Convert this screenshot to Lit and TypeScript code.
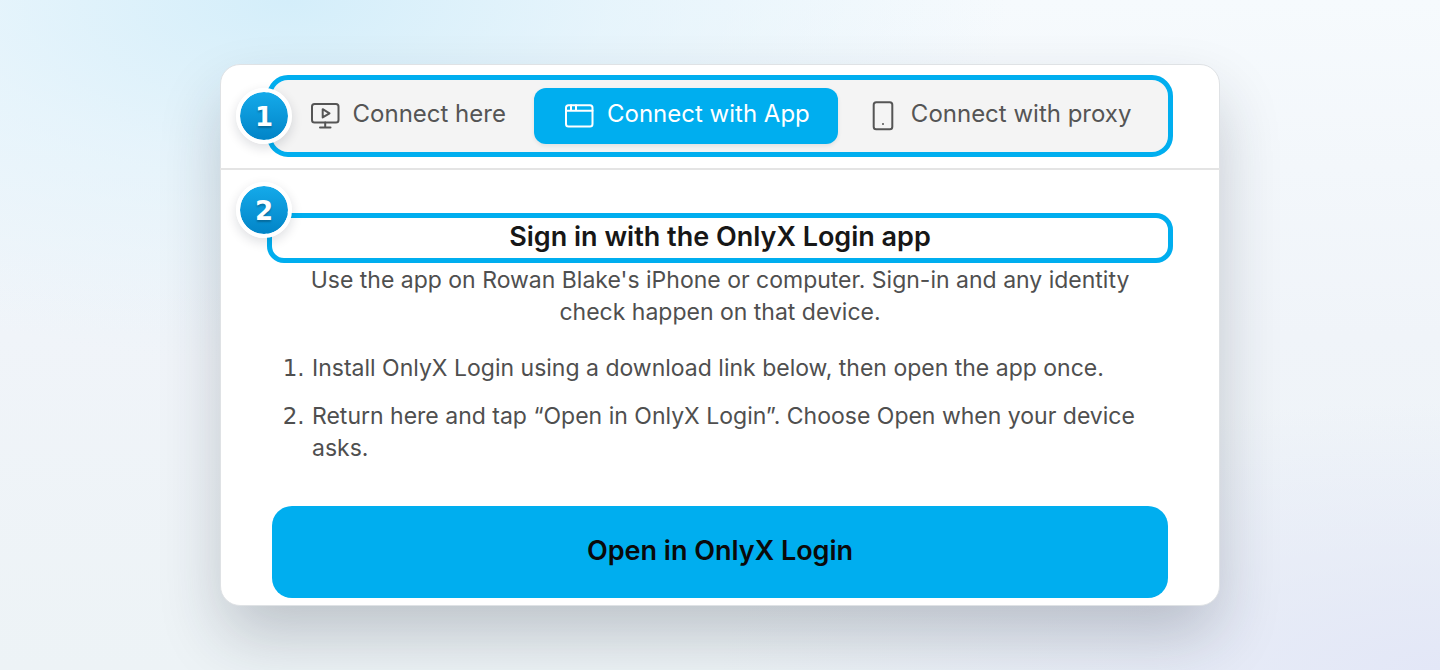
import { LitElement, html, css, svg } from "lit";
import { customElement, state } from "lit/decorators.js";

const icons = {
  here: svg`<rect x="3" y="4" width="26.500" height="18.500" rx="2.500"/><path d="M13.700 9.200v8.200l6.800-4.100z M16.200 22.500v5 M11 27.500h10.500"/>`,
  app: svg`<rect x="3" y="5.200" width="26.500" height="21.300" rx="2.500"/><path d="M3 10.700h26.500 M8 5.200v5.500 M13 5.200v5.500"/>`,
  proxy: svg`<rect x="6.700" y="2.300" width="18.600" height="27" rx="2.500"/><path d="M16 24v0.100"/>`,
};

const tabs = [
  { id: "here", label: "Connect here", icon: icons.here },
  { id: "app", label: "Connect with App", icon: icons.app },
  { id: "proxy", label: "Connect with proxy", icon: icons.proxy },
];

@customElement("app-root")
export class AppRoot extends LitElement {
  @state() active = "app";

  static styles = css`
    :host {
      box-sizing: border-box;
      display: flex;
      justify-content: center;
      align-items: center;
      min-height: 100vh;
      padding: 24px;
      font-family: Inter, "Liberation Sans", sans-serif;
      font-size: 23px;
      line-height: 32px;
      color: #4f4f4f;
      background:
        radial-gradient(ellipse 50% 54% at 20% 0%, #d4eefa 0%, rgba(224, 242, 251, 0.7) 45%, rgba(240, 247, 252, 0) 100%),
        radial-gradient(ellipse 50% 40% at 100% 100%, #e3e7f7 0%, rgba(234, 239, 248, 0) 100%),
        linear-gradient(#f6fafd 0%, #f0f4f9 50%, #edf3f6 100%);
    }
    * {
      box-sizing: border-box;
    }
    .card {
      width: 100%;
      max-width: 1000px;
      background: #fff;
      border: 1px solid #dfe2e5;
      border-radius: 20px;
      box-shadow: 0 32px 64px -4px rgba(30, 36, 56, 0.24);
    }
    .head {
      margin: 0 -1px;
      padding: 15px 52px 16px;
      border-bottom: 2px solid #e4e4e4;
    }
    .ring {
      position: relative;
      outline: 5px solid #00aeef;
    }
    .tabs {
      display: flex;
      padding: 8px;
      background: #f4f4f4;
      border-radius: 16px;
    }
    .tab {
      flex: 1 1 auto;
      display: flex;
      align-items: center;
      justify-content: center;
      gap: 12px;
      height: 56px;
      padding: 0 16px;
      border: 0;
      border-radius: 12px;
      background: none;
      color: #555;
      font: inherit;
      font-size: 24px;
      white-space: nowrap;
      cursor: pointer;
    }
    .tab.active {
      background: #00aeef;
      color: #fff;
      box-shadow: 0 2px 4px rgba(0, 0, 0, 0.08);
    }
    .label {
      padding-bottom: 4px;
    }
    .icon {
      flex: none;
      width: 32px;
      height: 32px;
      fill: none;
      stroke: currentColor;
      stroke-width: 2;
      stroke-linecap: round;
      stroke-linejoin: round;
    }
    .badge {
      position: absolute;
      left: -36px;
      display: grid;
      place-items: center;
      width: 56px;
      height: 56px;
      padding-top: 2px;
      border: 4px solid #fff;
      border-radius: 50%;
      background: linear-gradient(#14aaea, #0284c7) padding-box;
      box-shadow: 0 4px 12px rgba(15, 23, 42, 0.14);
      color: #fff;
      font: 700 26px/46px "DejaVu Sans", sans-serif;
      text-shadow: 0 2px 2px rgba(0, 0, 0, 0.25);
    }
    .first {
      top: 8px;
    }
    .second {
      top: -36px;
    }
    .body {
      padding: 48px 51px 7px;
    }
    .title {
      margin: 0 0 6px;
      padding-bottom: 2px;
      border-radius: 12px;
      color: #171717;
      font-size: 27px;
      font-weight: 600;
      line-height: 38px;
      text-align: center;
    }
    .intro {
      margin: 0 0 24px;
      padding: 0 24px;
      text-align: center;
    }
    .steps {
      display: grid;
      gap: 16px;
      margin: 0 0 42px;
      padding-left: 40px;
    }
    .steps li::marker {
      font-family: "DejaVu Sans", sans-serif;
    }
    .open {
      display: block;
      width: 100%;
      height: 92px;
      padding: 0 0 2px;
      border: 0;
      border-radius: 20px;
      background: #00aeef;
      color: #0a0a0a;
      font: inherit;
      font-size: 27px;
      font-weight: 600;
      cursor: pointer;
    }
  `;

  render() {
    return html`
      <main class="card">
        <header class="head">
          <div class="ring tabs" role="tablist">
            <span class="badge first">1</span>
            ${tabs.map(
              (t) => html`<button
                class="tab ${t.id === this.active ? "active" : ""}"
                role="tab"
                aria-selected=${t.id === this.active ? "true" : "false"}
                @click=${() => (this.active = t.id)}
              >
                <svg class="icon" viewBox="0 0 32 32" aria-hidden="true">${t.icon}</svg>
                <span class="label">${t.label}</span>
              </button>`
            )}
          </div>
        </header>
        <section class="body">
          <h1 class="ring title"><span class="badge second">2</span>Sign in with the OnlyX Login app</h1>
          <p class="intro">
            Use the app on Rowan Blake's iPhone or computer. Sign-in and any identity check happen on that device.
          </p>
          <ol class="steps">
            <li>Install OnlyX Login using a download link below, then open the app once.</li>
            <li>Return here and tap “Open in OnlyX Login”. Choose Open when your device asks.</li>
          </ol>
          <button class="open">Open in OnlyX Login</button>
        </section>
      </main>
    `;
  }
}
